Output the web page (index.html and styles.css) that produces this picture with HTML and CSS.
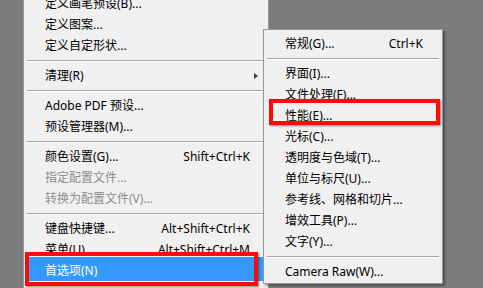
FILE: index.html
```html
<!DOCTYPE html>
<html lang="zh-CN">
<head>
    <meta charset="UTF-8">
    <title>编辑菜单 - 首选项</title>
    <link rel="stylesheet" href="styles.css">
</head>
<body>

<div class="desk">

    <div class="menu main-menu">
        <div class="item"><span class="label">定义画笔预设(B)...</span></div>
        <div class="item"><span class="label">定义图案...</span></div>
        <div class="item"><span class="label">定义自定形状...</span></div>
        <div class="sep"></div>
        <div class="item"><span class="label">清理(R)</span><span class="sub"><i class="arrow"></i></span></div>
        <div class="sep"></div>
        <div class="item"><span class="label">Adobe PDF 预设...</span></div>
        <div class="item"><span class="label">预设管理器(M)...</span></div>
        <div class="sep"></div>
        <div class="item"><span class="label">颜色设置(G)...</span><span class="key">Shift+Ctrl+K</span></div>
        <div class="item off"><span class="label">指定配置文件...</span></div>
        <div class="item off"><span class="label">转换为配置文件(V)...</span></div>
        <div class="sep"></div>
        <div class="item"><span class="label">键盘快捷键...</span><span class="key">Alt+Shift+Ctrl+K</span></div>
        <div class="item"><span class="label">菜单(U)</span><span class="key">Alt+Shift+Ctrl+M</span></div>
        <div class="item active"><span class="label">首选项(N)</span></div>
    </div>

    <div class="menu sub-menu">
        <div class="item"><span class="label">常规(G)...</span><span class="key">Ctrl+K</span></div>
        <div class="sep"></div>
        <div class="item"><span class="label">界面(I)...</span></div>
        <div class="item"><span class="label">文件处理(F)...</span></div>
        <div class="item"><span class="label">性能(E)...</span></div>
        <div class="item"><span class="label">光标(C)...</span></div>
        <div class="item"><span class="label">透明度与色域(T)...</span></div>
        <div class="item"><span class="label">单位与标尺(U)...</span></div>
        <div class="item"><span class="label">参考线、网格和切片...</span></div>
        <div class="item"><span class="label">增效工具(P)...</span></div>
        <div class="item"><span class="label">文字(Y)...</span></div>
        <div class="sep"></div>
        <div class="item"><span class="label">Camera Raw(W)...</span></div>
    </div>

    <!-- annotation boxes drawn over the screenshot -->
    <div class="mark mark-prefs"></div>
    <div class="mark mark-perf"></div>

</div>

</body>
</html>
```

FILE: styles.css
```css
body {
    margin: 0;
    background-color: #7c7c7c;
    font-family: "Noto Sans", "Noto Sans CJK SC", sans-serif;
    font-size: 12px;
    color: #000;
    overflow: hidden;
}

.desk {
    position: relative;
    width: 483px;
    height: 288px;
    overflow: hidden;
}

.menu {
    position: absolute;
    background-color: #f0f0f0;
    border: 1px solid #979797;
    box-sizing: border-box;
}

.main-menu {
    left: 23px;
    top: -10px;
    width: 246px;
    padding: 2px 0 24px;
}

.sub-menu {
    left: 263px;
    top: 29px;
    width: 180px;
    padding: 3px 0 1px;
    box-shadow: 2px 2px 2px rgba(0, 0, 0, 0.35);
}

.item {
    display: flex;
    align-items: center;
    height: 21px;
    line-height: 21px;
    white-space: nowrap;
}

.main-menu .item {
    margin: 0 3px;
    padding: 0 7px 0 18px;
}

.sub-menu .item {
    padding: 0 19px 0 21px;
}

.label {
    flex: 1;
}

.key {
    text-align: right;
}

.main-menu .item .key {
    margin-right: 8px;
}

.sub {
    width: 8px;
    display: flex;
    align-items: center;
}

.arrow {
    display: block;
    margin-left: 4px;
    width: 0;
    height: 0;
    border-top: 3.5px solid transparent;
    border-bottom: 3.5px solid transparent;
    border-left: 4px solid #3c3c3c;
}

.off {
    color: #8e8e8e;
}

.active {
    background-color: #3399ff;
    color: #fff;
    height: 24px;
    margin-top: -3px !important;
    padding-top: 3px !important;
    box-sizing: border-box;
}

.sep {
    height: 9px;
    display: flex;
    align-items: center;
}

.sep::before {
    content: "";
    flex: 1;
    height: 1px;
    margin: 0 3px;
    background-color: #a5a5a5;
    border-bottom: 1px solid #fff;
}

.mark {
    position: absolute;
    border: 4px solid #ff0a0a;
    box-sizing: border-box;
    box-shadow: 1px 1px 2px rgba(0, 0, 0, 0.45);
}

.mark-prefs {
    left: 25px;
    top: 252px;
    width: 233px;
    height: 34px;
}

.mark-perf {
    left: 269px;
    top: 99px;
    width: 171px;
    height: 26px;
}
```
